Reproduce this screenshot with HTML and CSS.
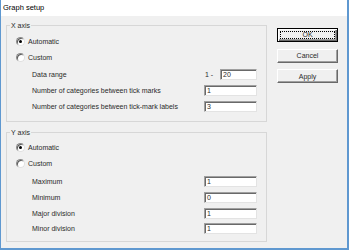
FILE: index.html
```html
<!DOCTYPE html>
<html>
<head>
<meta charset="utf-8">
<link rel="stylesheet" href="styles.css">
</head>
<body>
<div class="window">
  <div class="titlebar">Graph setup</div>
  <div class="client">
    <div class="groups">
      <section class="group group-x">
        <div class="group-title">X axis</div>
        <div class="radios">
          <div class="radio-row"><span class="radio checked"></span><span>Automatic</span></div>
          <div class="radio-row"><span class="radio"></span><span>Custom</span></div>
        </div>
        <div class="fields">
          <span class="lbl">Data range</span>
          <span class="ctl"><span class="prefix">1 -</span><span class="input short">20</span></span>
          <span class="lbl">Number of categories between tick marks</span>
          <span class="ctl"><span class="input">1</span></span>
          <span class="lbl">Number of categories between tick-mark labels</span>
          <span class="ctl"><span class="input">3</span></span>
        </div>
      </section>
      <section class="group group-y">
        <div class="group-title">Y axis</div>
        <div class="radios">
          <div class="radio-row"><span class="radio checked"></span><span>Automatic</span></div>
          <div class="radio-row"><span class="radio"></span><span>Custom</span></div>
        </div>
        <div class="fields">
          <span class="lbl">Maximum</span>
          <span class="ctl"><span class="input">1</span></span>
          <span class="lbl">Minimum</span>
          <span class="ctl"><span class="input">0</span></span>
          <span class="lbl">Major division</span>
          <span class="ctl"><span class="input">1</span></span>
          <span class="lbl">Minor division</span>
          <span class="ctl"><span class="input">1</span></span>
        </div>
      </section>
    </div>
    <div class="buttons">
      <button class="btn default"><span class="focus">OK</span></button>
      <button class="btn"><span class="cap">Cancel</span></button>
      <button class="btn"><span class="cap">Apply</span></button>
    </div>
  </div>
</div>
</body>
</html>
```
FILE: styles.css
```css
* { box-sizing: border-box; }
html, body { margin: 0; padding: 0; }
body {
  width: 349px;
  height: 250px;
  overflow: hidden;
  font-family: "Liberation Sans", Arial, sans-serif;
  font-size: 7px;
  color: #2a2a2a;
  background: #f0f0f0;
}
.window {
  width: 349px;
  height: 250px;
  border-left: 1px solid #5f98d0;
  border-right: 2px solid #5f98d0;
  border-bottom: 2px solid #5f98d0;
  background: #f0f0f0;
  display: flex;
  flex-direction: column;
}
.titlebar {
  height: 16px;
  background: #fff;
  padding-left: 2px;
  font-size: 7.5px;
  line-height: 16px;
  color: #000;
}
.client {
  display: flex;
  align-items: flex-start;
  gap: 10px;
  padding: 9px 0 0 5px;
}
.groups {
  width: 261px;
  display: flex;
  flex-direction: column;
  gap: 10px;
}
.group {
  border: 1px solid #d7d7d7;
}
.group-x { padding-bottom: 7px; }
.group-y { padding-bottom: 4px; }
.group-title {
  margin: -5px 0 0 3px;
  padding: 0 1px;
  background: #f0f0f0;
  width: fit-content;
  height: 9px;
  line-height: 9px;
}
.radios {
  margin-top: 3px;
  padding-left: 9px;
}
.radio-row {
  height: 16px;
  display: flex;
  align-items: center;
  gap: 3px;
  line-height: 9px;
}
.radio {
  width: 9px;
  height: 9px;
  border-radius: 50%;
  background: #fff;
  border: 1px solid;
  border-color: #8a8a8a #e0e0e0 #e0e0e0 #8a8a8a;
  box-shadow: inset 1px 1px 0 #5a5a5a;
  display: flex;
  align-items: center;
  justify-content: center;
}
.radio.checked::after {
  content: "";
  width: 3px;
  height: 3px;
  border-radius: 50%;
  background: #000;
}
.fields {
  margin-top: 2px;
  display: grid;
  grid-template-columns: 1fr 53px;
  grid-auto-rows: 15.66px;
  align-items: center;
  padding: 0 9px 0 25px;
  line-height: 9px;
}
.ctl {
  display: flex;
  align-items: center;
  justify-content: space-between;
}
.input {
  flex: 1;
  height: 11px;
  background: #fff;
  border: 1px solid;
  border-color: #a0a0a0 #e3e3e3 #e3e3e3 #a0a0a0;
  box-shadow: inset 1px 1px 0 #696969;
  padding-left: 2px;
  line-height: 9px;
}
.input.short {
  flex: 0 0 37px;
}
.prefix {
  padding-left: 1px;
}
.buttons {
  margin-top: 3px;
  display: flex;
  flex-direction: column;
  gap: 6.5px;
}
.btn {
  width: 61px;
  height: 14px;
  margin: 0;
  padding: 0;
  font: inherit;
  color: #2a2a2a;
  background: #f0f0f0;
  border: 1px solid;
  border-color: #fff #696969 #696969 #fff;
  box-shadow: inset -1px -1px 0 #a0a0a0;
  display: flex;
  align-items: center;
  justify-content: center;
  line-height: 9px;
}
.btn.default {
  border: 1px solid #000;
  box-shadow: inset 1px 1px 0 #fff, inset -1px -1px 0 #696969, inset -2px -2px 0 #a0a0a0;
}
.focus {
  flex: 1;
  align-self: stretch;
  margin: 2px;
  border: 1px dotted #000;
  display: flex;
  align-items: center;
  justify-content: center;
  line-height: 6px;
  overflow: visible;
}
```
